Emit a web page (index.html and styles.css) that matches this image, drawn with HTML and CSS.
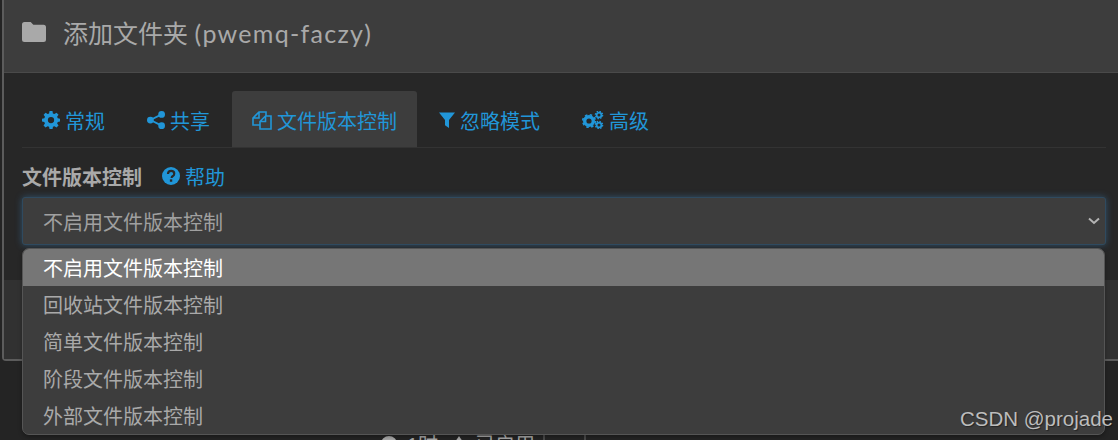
FILE: index.html
```html
<!DOCTYPE html>
<html lang="zh">
<head>
<meta charset="utf-8">
<title>添加文件夹</title>
<link rel="stylesheet" href="styles.css">
</head>
<body>
<div class="page">
  <div class="modal">
    <header class="modal-head">
      <svg class="folder" viewBox="0 0 24 20"><path d="M2.500 0h6.200l2.600 2.800h10.200A2.500 2.500 0 0 1 24 5.300v12.200A2.500 2.500 0 0 1 21.500 20h-19A2.500 2.500 0 0 1 0 17.500v-15A2.500 2.500 0 0 1 2.500 0z"/></svg>
      <h1 class="title">添加文件夹 <span class="title-id">(pwemq-faczy)</span></h1>
    </header>
    <div class="modal-body">
      <nav class="tabs">
        <a class="tab">
          <svg class="ico" viewBox="0 0 16 16"><path fill-rule="evenodd" d="M6.700 0h2.600l.4 2.200 1.300.55L12.900 1.500l1.800 1.800-1.250 1.850.55 1.300L16 6.900v2.500l-2 .4-.55 1.300 1.250 1.850-1.800 1.800-1.850-1.250-1.300.55-.4 2.200H6.700l-.4-2.200-1.300-.55-1.850 1.250-1.800-1.800 1.250-1.850-.55-1.300L0 9.400V6.900l2.100-.45.55-1.300L1.400 3.300l1.800-1.800L5 2.750l1.300-.55zM8 5.300a2.800 2.800 0 1 0 0 5.600 2.800 2.800 0 0 0 0-5.600z"/></svg>
          <span>常规</span>
        </a>
        <a class="tab">
          <svg class="ico" viewBox="0 0 16 16"><circle cx="3" cy="8" r="3"/><circle cx="13" cy="3" r="3"/><circle cx="13" cy="13" r="3"/><path d="M3 8l10-5M3 8l10 5" stroke="#2196d8" stroke-width="1.700" fill="none"/></svg>
          <span>共享</span>
        </a>
        <a class="tab active">
          <svg class="ico ico-files" viewBox="0 0 20 19"><path d="M14 5V1H7L1 7v7h7M7 1v6H1M13.500 5H19v13H8V10.500zM13.500 5v5.500H8" fill="none" stroke="#2196d8" stroke-width="1.600"/></svg>
          <span>文件版本控制</span>
        </a>
        <a class="tab">
          <svg class="ico ico-funnel" viewBox="0 0 16 16"><path d="M0 .500h16L10 8v8l-4-2.800V8z"/></svg>
          <span>忽略模式</span>
        </a>
        <a class="tab">
          <svg class="ico ico-gears" viewBox="0 0 22 18"><circle cx="7" cy="10" r="4.300" fill="none" stroke="#2196d8" stroke-width="3.400"/><circle cx="7" cy="10" r="6.300" fill="none" stroke="#2196d8" stroke-width="1.600" stroke-dasharray="2.500 2.450"/><circle cx="17" cy="4" r="2.400" fill="none" stroke="#2196d8" stroke-width="1.800"/><circle cx="17" cy="4" r="3.700" fill="none" stroke="#2196d8" stroke-width="1.200" stroke-dasharray="1.500 1.400"/><circle cx="17" cy="14" r="2.400" fill="none" stroke="#2196d8" stroke-width="1.800"/><circle cx="17" cy="14" r="3.700" fill="none" stroke="#2196d8" stroke-width="1.200" stroke-dasharray="1.500 1.400"/></svg>
          <span>高级</span>
        </a>
      </nav>
      <div class="field-head">
        <label class="field-label">文件版本控制</label>
        <a class="help">
          <svg class="ico" viewBox="0 0 16 16"><circle cx="8" cy="8" r="8"/><path d="M5.300 6.200C5.400 4.500 6.500 3.500 8.100 3.500c1.600 0 2.800 1 2.800 2.400 0 1.200-.7 1.800-1.500 2.300-.6.400-.8.600-.8 1.200v.4" fill="none" stroke="#2a2a2a" stroke-width="1.900"/><rect x="7" y="11" width="2.100" height="2.100" fill="#2a2a2a"/></svg>
          <span>帮助</span>
        </a>
      </div>
      <div class="select-wrap">
        <div class="select">
          <span>不启用文件版本控制</span>
          <svg class="chev" viewBox="0 0 12 8"><path d="M1 1.500l5 4.500 5-4.500" fill="none" stroke="#b4b4b4" stroke-width="2"/></svg>
        </div>
        <ul class="menu">
          <li class="opt selected">不启用文件版本控制</li>
          <li class="opt">回收站文件版本控制</li>
          <li class="opt">简单文件版本控制</li>
          <li class="opt">阶段文件版本控制</li>
          <li class="opt">外部文件版本控制</li>
        </ul>
      </div>
    </div>
    <div class="modal-foot"></div>
  </div>
  <div class="below">
    <svg class="below-ico" viewBox="0 0 16 16"><circle cx="8" cy="8" r="8"/></svg>
    <span class="below-time">1时</span>
    <svg class="below-ico below-arrow" viewBox="0 0 8 16"><path d="M4 0l4 6H0z"/></svg>
    <span class="below-state">已启用</span>
    <i class="below-rule"></i>
    <i class="below-rule below-rule-wide"></i>
  </div>
  <div class="watermark">CSDN @projade</div>
</div>
</body>
</html>
```
FILE: styles.css
```css
* { box-sizing: border-box; }
html, body { margin: 0; padding: 0; }
body {
  width: 1118px;
  height: 440px;
  overflow: hidden;
  background: #242424;
  font-family: "Liberation Sans", "Noto Sans CJK SC", sans-serif;
}
.page { position: relative; width: 1118px; height: 440px; padding-left: 2px; overflow: hidden; }
.modal {
  width: 1120px;
  height: 361px;
  border-left: 2px solid #5c5c5c;
  border-bottom: 2px solid #5c5c5c;
  border-radius: 0 0 0 4px;
  background: #272727;
  display: flex;
  flex-direction: column;
}
.modal-head {
  height: 73px;
  flex: none;
  background: #3d3d3d;
  border-bottom: 1px solid #4a4a4a;
  display: flex;
  align-items: center;
  padding: 0 0 8px 18px;
}
.folder { width: 24px; height: 20px; fill: #a9a9a9; margin-right: 17px; }
.title { margin: 0; font: 400 25px "Lato", "Noto Sans CJK SC", sans-serif; color: #a9a9a9; white-space: nowrap; }
.title-id { letter-spacing: 1.300px; }
.modal-body { flex: 1; padding: 18px 18px 0; }
.tabs { display: flex; gap: 2px; height: 57px; border-bottom: 1px solid #333; margin-right: -2px; }
.tab {
  display: flex;
  align-items: center;
  gap: 5px;
  padding: 2px 20px 0;
  color: #2196d8;
  font-size: 20px;
  border-radius: 3px 3px 0 0;
}
.tab.active { background: #3d3d3d; }
.ico { width: 18px; height: 18px; fill: #2196d8; flex: none; }
.ico-files { width: 20px; height: 19px; }
.ico-funnel { width: 16px; }
.ico-gears { width: 22px; }
.field-head { display: flex; align-items: center; gap: 20px; height: 30px; margin-top: 13px; }
.field-label { font-size: 20px; font-weight: 700; color: #a9a9a9; }
.help { display: flex; align-items: center; gap: 5px; color: #2196d8; font-size: 20px; }
.select-wrap { position: relative; margin-top: 6px; margin-right: -2px; }
.select {
  height: 48px;
  background: #3d3d3d;
  border: 1px solid #2f4a5f;
  border-radius: 3px;
  box-shadow: 0 0 7px rgba(60, 130, 190, .45);
  color: #a0a0a0;
  font-size: 20px;
  padding: 0 5px 0 20px;
  display: flex;
  align-items: center;
  justify-content: space-between;
}
.chev { width: 12px; height: 8px; }
.menu {
  position: absolute;
  left: 0;
  top: 51px;
  width: 1083px;
  margin: 0;
  padding: 0;
  list-style: none;
  background: #3d3d3d;
  border: 1px solid #555;
  border-radius: 7px;
  overflow: hidden;
  box-shadow: 0 2px 4px rgba(0,0,0,.3);
}
.opt { height: 37px; line-height: 37px; padding: 2px 0 0 20px; font-size: 20px; color: #a9a9a9; }
.opt.selected { background: #767676; color: #fff; }
.modal-foot { height: 79px; flex: none; background: #313131; }
.below { display: flex; align-items: flex-start; height: 79px; padding: 73px 0 0 379px; font-size: 20px; line-height: 22px; color: #a9a9a9; }
.below-ico { width: 16px; height: 16px; margin-top: 2px; fill: #a9a9a9; flex: none; }
.below-time { margin: 0 17px 0 10px; }
.below-arrow { width: 8px; }
.below-state { margin-left: 12px; }
.below-rule { width: 2px; height: 6px; margin-left: 8px; background: #4a4a4a; }
.below-rule-wide { margin-left: 39px; }
.watermark {
  position: absolute;
  right: 5px;
  bottom: 9px;
  color: #bdbdbd;
  font-size: 20.500px;
  text-shadow: 1px 1px 1px rgba(0,0,0,.4);
}
```
